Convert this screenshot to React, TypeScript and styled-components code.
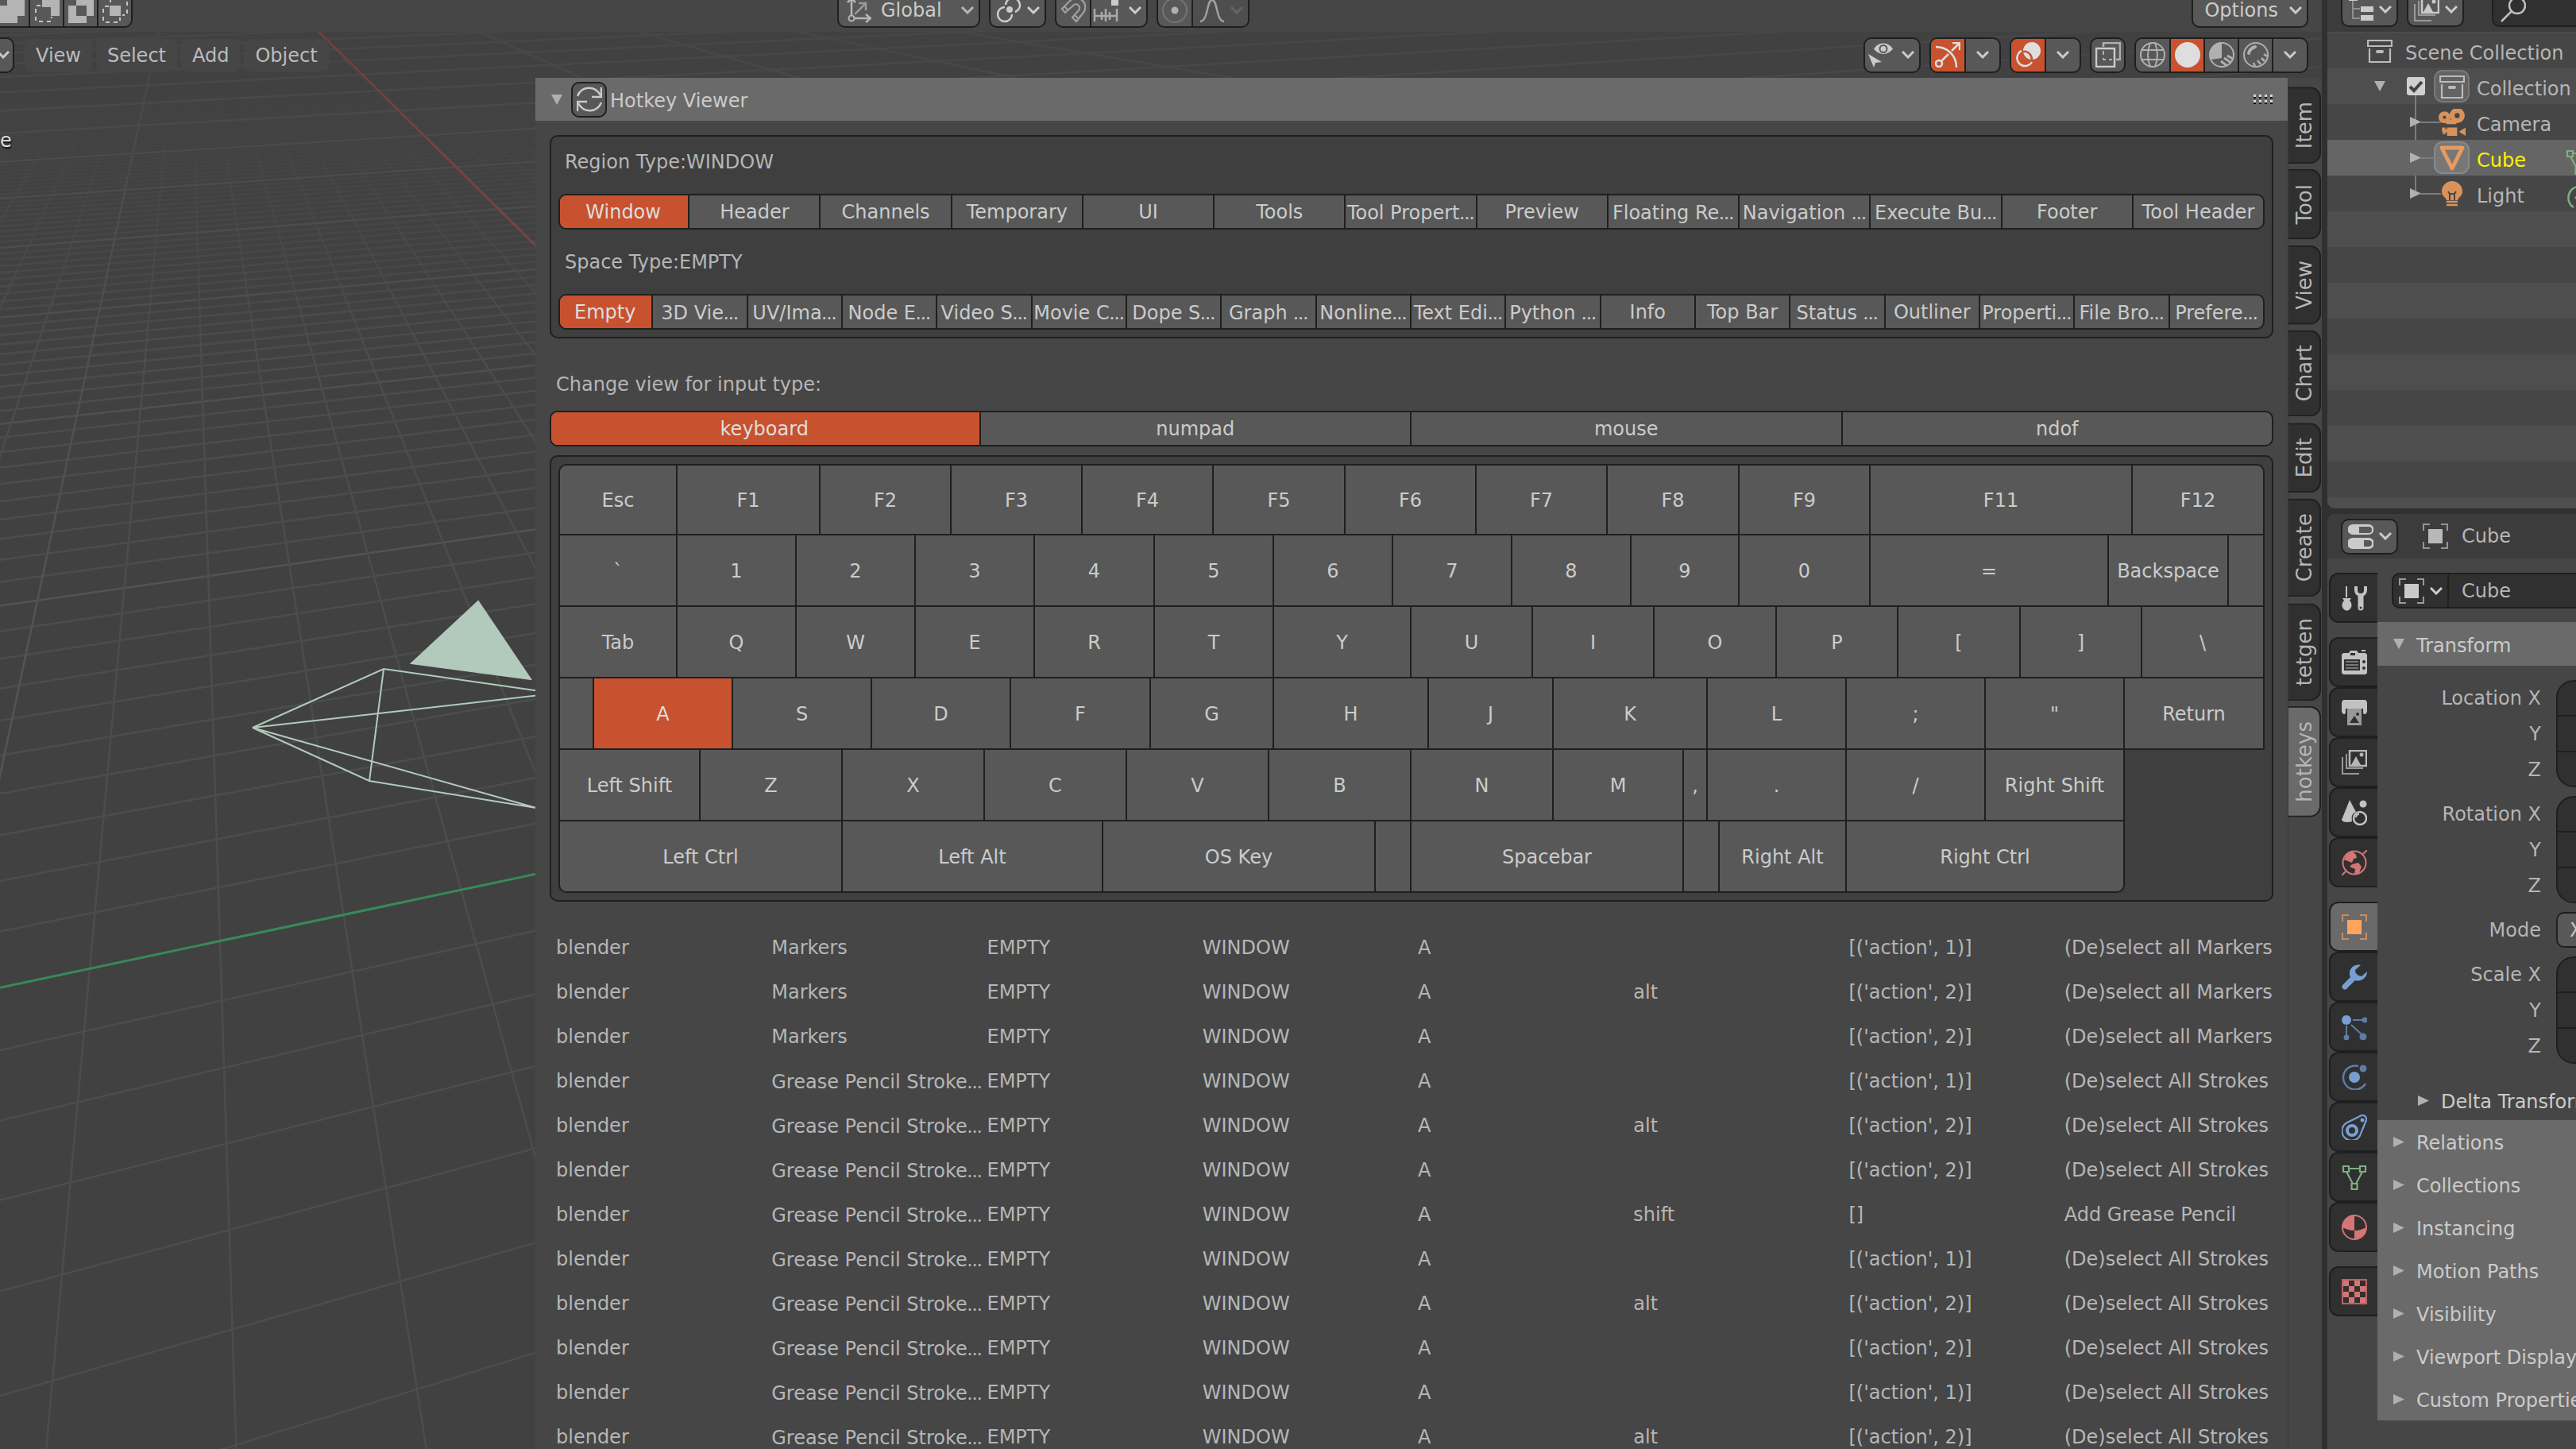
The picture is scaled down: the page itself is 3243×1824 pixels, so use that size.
import React from "react";
import styled, { createGlobalStyle, css } from "styled-components";

const c = {
  body: "#464646",
  gap: "#303030",
  box: "#3f3f3f",
  head: "#3c3c3c",
  button: "#585858",
  line: "#1f1f1f",
  accent: "#c8522f",
  panel: "#6a6a6a",
  field: "#303030",
  text: "#b6b6b6",
  bright: "#cbcbcb",
  orange: "#d8935c",
  blue: "#779fd3",
  red: "#d47676",
  green: "#7fae82",
};

const Global = createGlobalStyle`
  *, *::before, *::after { box-sizing: border-box; }
  html, body { margin: 0; height: 100%; background: ${c.gap}; }
  body, button, input, select {
    font-family: "DejaVu Sans", Verdana, sans-serif;
    font-size: 24px;
    line-height: 28px;
    color: ${c.text};
  }
  body { overflow: hidden; }
  button, input, select { margin: 0; padding: 0; border: 0; background: none; border-radius: 0; }
  button { display: flex; align-items: center; justify-content: center; white-space: nowrap; }
  input, select { appearance: none; outline: 0; min-width: 0; }
  svg { display: block; flex: none; }
  ul { list-style: none; margin: 0; padding: 0; }
`;

/* ---------- shell ---------- */

const Shell = styled.div`
  display: flex;
  gap: 7px;
  height: 100vh;
  overflow: hidden;
  background: ${c.gap};
`;

const Viewport = styled.main`
  position: relative;
  flex: 1 1 0;
  min-width: 0;
  display: flex;
  flex-direction: column;
  overflow: hidden;
  background: #414141;
`;

const Scene = styled.svg`
  position: absolute;
  inset: 0;
  width: 100%;
  height: 100%;
`;

const ToolHeader = styled.header`
  position: relative;
  display: flex;
  align-items: flex-end;
  height: 40px;
  padding: 0 17px 5px 0;
  background: ${c.body};
`;

const ViewHeader = styled.header`
  position: relative;
  display: flex;
  align-items: center;
  justify-content: space-between;
  height: 58px;
  padding: 0 17px 0 0;
`;

const ToolGroups = styled.div`
  display: flex;
  gap: 11px;
`;

const SelectModes = styled.div`
  display: flex;
  width: 1054px;
  margin-left: -8px;
  margin-right: 8px;
`;

const OptionsSlot = styled.div`
  margin-left: auto;
`;

const Group = styled.div`
  flex: none;
  display: flex;
  height: 45px;
  border: 2px solid ${c.line};
  border-radius: 10px;
  background: ${c.button};
  overflow: hidden;
`;

const GroupButton = styled.button<{ $w: number; $active?: boolean; $dim?: boolean; $menu?: boolean; $gap?: number }>`
  flex: none;
  width: ${(p) => p.$w}px;
  gap: ${(p) => p.$gap || 7}px;
  color: ${(p) => (p.$active ? "#dedede" : c.bright)};
  background: ${(p) => (p.$active ? c.accent : p.$dim ? "#4e4e4e" : "transparent")};
  ${(p) =>
    p.$menu &&
    css`
      justify-content: flex-end;
      padding-right: 6px;
    `}
  & + & { border-left: 2px solid ${c.line}; }
`;

const OrientationLabel = styled.label`
  display: flex;
  align-items: center;
  width: 176px;
  padding: 0 6px 0 9px;
`;

const OrientationSelect = styled.select`
  flex: 1;
  padding-left: 12px;
  color: ${c.bright};
`;

const Menus = styled.nav`
  display: flex;
  align-items: center;
  gap: 5px;
`;

const ModeEnd = styled.button`
  width: 28px;
  height: 45px;
  margin: 0 8px 0 -10px;
  border: 2px solid ${c.line};
  border-radius: 10px;
  background: ${c.button};
  color: ${c.bright};
`;

const MenuButton = styled.button`
  height: 41px;
  padding: 2px 14px 0;
  border-radius: 8px;
  background: #464646;
  color: #bcbcbc;
`;

const Work = styled.div`
  position: relative;
  flex: 1;
  min-height: 0;
  display: flex;
`;

const SceneSpace = styled.div`
  flex: none;
  width: 674px;
  padding-top: 65px;
  color: #dedede;
  text-shadow: 1px 2px 2px #111;
`;

/* ---------- hotkey panel ---------- */

const Sidebar = styled.section`
  flex: 1;
  min-width: 0;
  background: ${c.body};
  overflow: hidden;
`;

const SideHeader = styled.header`
  display: flex;
  align-items: center;
  height: 54px;
  padding: 0 18px 0 20px;
  background: ${c.panel};
  color: ${c.bright};
`;

const RefreshButton = styled.button`
  width: 45px;
  height: 45px;
  margin: 0 4px 0 11px;
  border: 2px solid ${c.line};
  border-radius: 10px;
  background: ${c.button};
  color: ${c.bright};
`;

const Title = styled.h2`
  flex: 1;
  margin: 0;
  padding-top: 4px;
  font-size: 24px;
  font-weight: 400;
`;

const SideBody = styled.div`
  display: flex;
  flex-direction: column;
  padding: 18px 18px 0;
`;

const Box = styled.div`
  display: flex;
  flex-direction: column;
  gap: 18px;
  padding: 9px;
  border: 2px solid ${c.line};
  border-radius: 10px;
  background: ${c.box};
`;

const Caption = styled.div`
  height: 45px;
  padding-left: 8px;
  line-height: 47px;
`;

const InputType = styled.div`
  display: flex;
  flex-direction: column;
  gap: 11px;
  padding: 35px 0 11px;
`;

const Segments = styled.div`
  display: flex;
  height: 45px;
  border: 2px solid ${c.line};
  border-radius: 10px;
  background: ${c.button};
  overflow: hidden;
`;

const Segment = styled.button<{ $active?: boolean }>`
  flex: 1 1 0;
  min-width: 0;
  padding-top: 1px;
  overflow: hidden;
  border-right: 2px solid ${c.line};
  color: ${(p) => (p.$active ? "#dedede" : c.bright)};
  background: ${(p) => (p.$active ? c.accent : "transparent")};
  &:first-child { margin-left: -2px; }
  &:last-child { margin-right: -2px; }
`;

const Dots = styled.span`
  font-family: "Open Sans", sans-serif;
`;

const Board = styled.div`
  display: flex;
  flex-direction: column;
`;

const KeyRow = styled.div`
  display: flex;
  height: 92px;
  margin-top: -2px;
  &:first-child { height: 90px; margin-top: 0; }
`;

/* The 4px of side borders is the flex base of a key, so only the rest is shared out. */
const Key = styled.button<{ $span: number; $active?: boolean; $round?: string }>`
  flex: ${(p) => p.$span - 2} 1 0;
  min-width: 0;
  padding-top: 2px;
  border: 2px solid ${c.line};
  border-radius: ${(p) => p.$round || "0"};
  background: ${(p) => (p.$active ? c.accent : c.button)};
  color: ${(p) => (p.$active ? "#dedede" : c.bright)};
  & + & { margin-left: -2px; }
`;

const KeySpace = styled.div<{ $span: number }>`
  flex: ${(p) => p.$span + 2} 1 0;
  margin-left: -2px;
`;

const Bindings = styled.table`
  width: 100%;
  margin-top: 29px;
  table-layout: fixed;
  border-collapse: collapse;
  td { height: 56px; padding: 2px 0 0 8px; white-space: nowrap; }
`;

/* ---------- category tabs ---------- */

const Tabs = styled.nav`
  flex: none;
  width: 43px;
  display: flex;
  flex-direction: column;
  gap: 7px;
  padding: 11px 1px 0 0;
  border-left: 1px solid #3a3a3a;
  background: ${c.body};
`;

const Tab = styled.button<{ $active?: boolean }>`
  width: 41px;
  padding: 17px 0;
  writing-mode: vertical-rl;
  transform: rotate(180deg);
  border: 2px solid ${c.line};
  border-right: 0;
  border-radius: 14px 0 0 14px;
  background: ${(p) => (p.$active ? c.panel : c.field)};
  font-size: 26px;
  line-height: 36px;
`;

/* ---------- right column ---------- */

const Right = styled.aside`
  flex: none;
  width: 313px;
  display: flex;
  flex-direction: column;
  gap: 7px;
`;

const Outliner = styled.section`
  flex: none;
  height: 640px;
  border-radius: 0 0 0 10px;
  background: ${c.body};
  overflow: hidden;
`;

const OutlinerHead = styled.header`
  display: flex;
  align-items: flex-end;
  gap: 11px;
  height: 40px;
  padding: 0 0 6px 17px;
  background: ${c.head};
`;

const SearchField = styled.label`
  flex: none;
  display: flex;
  align-items: center;
  width: 180px;
  height: 45px;
  margin-left: 24px;
  padding-left: 9px;
  border: 2px solid ${c.line};
  border-radius: 10px;
  background: ${c.field};
`;

const Tree = styled.ul`
  height: 600px;
  padding-top: 1px !important;
  background: repeating-linear-gradient(#464646 0 45px, #4e4e4e 45px 90px) 0 1px;
`;

const TreeRow = styled.li<{ $selected?: boolean }>`
  position: relative;
  display: grid;
  grid-template-columns: 92px 42px 45px 1fr;
  align-items: center;
  height: 45px;
  background: ${(p) => (p.$selected ? "#656565" : "transparent")};
`;

const Expander = styled.button<{ $pad: number }>`
  justify-self: end;
  margin-right: ${(p) => p.$pad}px;
`;

const Check = styled.input`
  width: 23px;
  height: 23px;
  margin-left: 8px;
  border-radius: 3px;
  background: #d0d0d0
    url("data:image/svg+xml,%3Csvg xmlns='http://www.w3.org/2000/svg' viewBox='0 0 23 23'%3E%3Cpath d='M4 12l5 5L19 6' fill='none' stroke='%23444' stroke-width='4'/%3E%3C/svg%3E");
`;

const Badge = styled.span<{ $on?: boolean }>`
  display: flex;
  align-items: center;
  justify-content: center;
  width: 45px;
  height: 41px;
  border-radius: 11px;
  ${(p) =>
    p.$on &&
    css`
      background: rgba(255, 255, 255, 0.12);
      border: 2px solid rgba(255, 255, 255, 0.14);
    `}
`;

const RootIcon = styled.span`
  justify-self: end;
  margin-right: 10px;
`;

const TreeLabel = styled.span<{ $root?: boolean; $lit?: boolean }>`
  ${(p) => p.$root && "grid-column: 2 / -1;"}
  display: flex;
  justify-content: space-between;
  padding: 6px 0 0 ${(p) => (p.$root ? 6 : 9)}px;
  white-space: nowrap;
  color: ${(p) => (p.$lit ? "#fff200" : c.text)};
`;

const DataSlot = styled.span`
  width: 13px;
  height: 28px;
`;

const TreeLine = styled.span<{ $stem?: boolean }>`
  position: absolute;
  background: #7c7c7c;
  ${(p) =>
    p.$stem
      ? "left: 110px; top: 34px; width: 2px; height: 120px;"
      : "left: 117px; top: 22px; width: 26px; height: 2px;"}
`;

const Properties = styled.section`
  flex: 1;
  display: flex;
  flex-direction: column;
  border-radius: 10px 0 0 0;
  background: ${c.body};
  overflow: hidden;
`;

const PropHead = styled.header`
  display: flex;
  align-items: center;
  height: 56px;
  padding-left: 17px;
  background: ${c.head};
`;

const PropCrumb = styled.span`
  padding-left: 17px;
`;

const CrumbIcon = styled.span`
  padding-left: 31px;
`;

const PropBody = styled.div`
  flex: 1;
  display: flex;
`;

const NavTabs = styled.nav`
  flex: none;
  display: flex;
  flex-direction: column;
  gap: 18px;
  width: 63px;
  padding: 18px 0 0 2px;
`;

const NavTab = styled.button<{ $active?: boolean }>`
  width: 61px;
  height: 63px;
  border: 2px solid ${c.line};
  border-right: 0;
  border-radius: 12px 0 0 12px;
  background: ${(p) => (p.$active ? c.panel : c.field)};
`;

const PropMain = styled.div`
  flex: 1;
  min-width: 0;
  padding-top: 18px;
  overflow: hidden;
`;

const NameField = styled.div`
  display: flex;
  width: 400px;
  height: 45px;
  margin: 0 0 17px 18px;
  border: 2px solid ${c.line};
  border-radius: 10px;
  background: ${c.field};
  overflow: hidden;
`;

const NameInput = styled.input`
  flex: 1;
  padding-left: 16px;
  border-left: 2px solid ${c.line};
`;

const PanelHead = styled.button<{ $h: number; $indent?: boolean; $plain?: boolean }>`
  width: 100%;
  height: ${(p) => p.$h}px;
  justify-content: flex-start;
  gap: 15px;
  padding-left: ${(p) => (p.$indent ? 51 : 20)}px;
  background: ${(p) => (p.$plain ? "transparent" : c.panel)};
  color: ${c.bright};
`;

const PanelName = styled.span`
  padding-top: 4px;
`;

const Transform = styled.div`
  display: flex;
  flex-direction: column;
  gap: 11px;
  padding: 18px 0 21px;
`;

const Vector = styled.div`
  display: grid;
  grid-template-columns: 206px 100px;
  column-gap: 19px;
`;

const AxisLabels = styled.div`
  display: flex;
  flex-direction: column;
  text-align: right;
  label { height: 45px; line-height: 47px; white-space: nowrap; }
`;

const AxisFields = styled.div`
  display: flex;
  flex-direction: column;
  border: 2px solid ${c.line};
  border-radius: 22px;
  background: ${c.field};
  overflow: hidden;
  input { width: 100%; flex: 1; padding-left: 20px; }
  input + input { border-top: 2px solid ${c.line}; }
`;

const ModeSelect = styled.select`
  width: 200px;
  height: 45px;
  padding-left: 15px;
  border: 2px solid ${c.line};
  border-radius: 10px;
  background: ${c.button};
  color: ${c.bright};
`;

const NavGroup = styled.div`
  display: flex;
  flex-direction: column;
`;

/* ---------- icons ---------- */

type IconProps = { children: React.ReactNode; color?: string; size?: number };
const Icon = ({ children, color = "currentColor", size = 32 }: IconProps) => (
  <svg width={size} height={size} viewBox="0 0 32 32" fill="none" stroke={color} strokeWidth={2} aria-hidden="true">
    {children}
  </svg>
);

const Chevron = ({ color = "currentColor" }: { color?: string }) => (
  <svg width="16" height="10" viewBox="0 0 16 10" fill="none" stroke={color} strokeWidth="3" aria-hidden="true">
    <path d="M1 1l7 7 7-7" />
  </svg>
);

const Down = () => (
  <svg width="14" height="13" viewBox="0 0 14 13" aria-hidden="true">
    <path d="M0 0h14L7 13z" fill="#b0b0b0" />
  </svg>
);

const Across = () => (
  <svg width="14" height="13" viewBox="0 0 14 13" aria-hidden="true">
    <path d="M0 0v13L14 6.500z" fill="#b0b0b0" />
  </svg>
);

const f = { fill: "currentColor", stroke: "none" } as const;
const S = "#b4b4b4";

const IconExtend = () => <Icon><path fill={S} stroke="none" d="M10 0h22v23h-9v9H0V10h10z" /></Icon>;
const IconSubtract = () => (
  <Icon>
    <path fill={S} stroke="none" d="M10 0h22v23H21V12H10z" />
    <path stroke="#c4c4c4" strokeDasharray="5 5" d="M8 10H2v20h20v-6" />
  </Icon>
);
const IconXor = () => <Icon><path fill={S} stroke="none" fillRule="evenodd" d="M0 10h23v22H0zM10 0h22v23H10z" /></Icon>;
const IconIntersect = () => (
  <Icon>
    <path fill={S} stroke="none" d="M9 10h14v13H9z" />
    <path stroke="#c4c4c4" strokeDasharray="5 5" d="M8 11H1v20h21v-6M10 6V1h21v21h-6" />
  </Icon>
);
const IconAxes = () => (
  <Icon>
    <circle cx="7" cy="26" r="3.500" />
    <path d="M7 22V2M2 6l5-5 5 5M11 26h19M25 21l6 5-6 5" strokeWidth="2.500" />
    <path stroke="#999" d="M11 21L24 8M16 7h9v9" strokeWidth="2.500" />
  </Icon>
);
const IconPivot = () => (
  <Icon>
    <circle cx="17" cy="15" r="4" {...f} />
    <path strokeWidth="2.500" d="M11 12a9 9 0 1 0 9 9M12 9a9 9 0 1 1 12 9" />
  </Icon>
);
const IconMagnet = () => (
  <Icon color="#a0a0a0">
    <path strokeWidth="2.200" d="M2 14L12 4a11 11 0 0 1 16 16L20 30l-5-5 8-9a4.500 4.500 0 0 0-7-6L6 19zM5 11l5 5M18 22l5 5" />
  </Icon>
);
const IconIncrement = () => (
  <Icon>
    <path {...f} d="M23 1h10v9H23z" />
    <path stroke="#aaa" strokeWidth="2.500" d="M2 14v16M2 23h28M30 14v16M11 18v10M16 14v16M21 18v10" />
  </Icon>
);
const IconProportional = () => (
  <Icon>
    <circle cx="16" cy="16" r="15" stroke="#757575" />
    <circle cx="16" cy="16" r="4.500" fill="#b0b0b0" stroke="none" />
  </Icon>
);
const IconBell = () => (
  <Icon color="#a0a0a0"><path strokeWidth="2.500" d="M1 30c10 0 8-27 15-27s5 27 15 27" /></Icon>
);
const IconVisibility = () => (
  <Icon>
    <path {...f} d="M7 8.500C13-1 25-1 31 8.500 25 17 13 17 7 8.500z" />
    <circle cx="19" cy="8.500" r="4.500" stroke={c.button} />
    <path {...f} d="M0 15l17 10-8 1-2 6z" />
  </Icon>
);
const IconGizmo = () => (
  <Icon>
    <circle cx="5" cy="27" r="4" strokeWidth="2.500" />
    <path strokeWidth="2.500" d="M8 24l9-9M1 6c14 0 26 10 26 26M21 11L31 1M22 1h9v9" />
  </Icon>
);
const IconOverlay = () => (
  <Icon>
    <circle cx="21" cy="11" r="11" {...f} />
    <path strokeWidth="2.500" d="M8 11a10 10 0 1 0 13 14" />
    <path stroke={c.accent} strokeWidth="2.500" d="M10 12c6-1 11 4 11 10" />
  </Icon>
);
const IconXray = () => (
  <Icon>
    <path strokeWidth="2.500" d="M1 8h23v23H1z" />
    <path stroke="#b0b0b0" d="M10 6V1h21v21h-5" strokeWidth="2.500" />
    <path strokeDasharray="5 4" d="M10 11v11h11" stroke="#b0b0b0" />
  </Icon>
);
const IconWire = () => (
  <Icon color="#b0b0b0">
    <circle cx="16" cy="16" r="15" />
    <path d="M3 10h26M3 22h26M13 1c-4 10-4 20 0 30M19 1c4 10 4 20 0 30" />
  </Icon>
);
const IconSolid = () => <Icon><circle cx="16" cy="16" r="16" {...f} /></Icon>;
const IconMatPrev = () => (
  <Icon color="#b0b0b0">
    <circle cx="16" cy="16" r="15" />
    <path fill="#b0b0b0" stroke="none" d="M16 0v20L2 22A16 16 0 0 1 16 0z" />
    <path strokeWidth="3" d="M19 20l9 6M15 24l8 6M23 17l7 4" />
  </Icon>
);
const IconRendered = () => (
  <Icon color="#b0b0b0">
    <circle cx="16" cy="16" r="15" />
    <path strokeWidth="4" strokeLinecap="round" d="M7 14c1-4 4-7 8-8" />
    <path strokeWidth="2.500" d="M26 15l4 3M23 20l4 4M18 23l4 5M13 26l2 4" />
  </Icon>
);
const IconRefresh = () => (
  <Icon>
    <path strokeWidth="2.500" d="M1 12C6-1 23-2 30 11M31 1v12H19M31 20C26 33 9 34 2 21M1 31V19h12" />
  </Icon>
);
const IconTree = () => (
  <Icon>
    <path {...f} d="M1 0h11v5H1zM16 12h16v7H16zM16 23h16v7H16z" />
    <path stroke="#8f8f8f" d="M6 5v22h9M6 15h9" />
  </Icon>
);
const IconLayers = () => (
  <Icon>
    <path strokeWidth="2.500" d="M10 1h21v19H10z" />
    <path {...f} d="M12 19l6-11 6 11z" />
    <circle cx="25" cy="6" r="2.500" {...f} />
    <path stroke="#999" d="M6 5v18h21M1 9v21h21" />
  </Icon>
);
const IconSearch = () => (
  <Icon color="#c0c0c0"><circle cx="21" cy="11" r="10" strokeWidth="2.500" /><path strokeWidth="2.500" d="M14 18L1 31" /></Icon>
);
const IconCollection = () => (
  <Icon color="#bbb">
    <path d="M1 3h30v7H1zM3 13v17h26V13" strokeWidth="2.200" />
    <path strokeWidth="4" strokeLinecap="round" d="M13 17h6" />
  </Icon>
);
const IconCamera = () => (
  <Icon color={c.orange} size={34}>
    <circle cx="7" cy="10" r="4.500" strokeWidth="5" />
    <circle cx="22" cy="8" r="6" strokeWidth="6" />
    <path fill={c.orange} stroke="none" d="M9 13h12v5H9zM4 22h4v2h2v-2h12v10H10v-4H8v2H5v-3H4zM24 27l8-5v10z" />
  </Icon>
);
const IconCone = () => (
  <Icon color="#e59b62"><path strokeWidth="5" strokeLinejoin="round" d="M3 3h26L16 29z" /></Icon>
);
const IconBulb = () => (
  <Icon color={c.orange}>
    <path fill={c.orange} stroke="none" d="M16 0a13 13 0 0 1 13 13c0 6-4 6-6 11H9C7 19 3 19 3 13A13 13 0 0 1 16 0z" />
    <path stroke="#464646" d="M11 13l2 3h6l2-3M13 16v8M19 16v8" />
    <path strokeWidth="2.500" d="M9 26h14M9 30h14" />
  </Icon>
);
const IconMesh = () => (
  <Icon color={c.green}>
    <path strokeWidth="2.200" d="M2 2h7v7H2zM23 2h7v7h-7zM12.500 24h7v7h-7zM9 5h14M6 9l8 15M26 9l-8 15" />
  </Icon>
);
const IconLightData = () => (
  <Icon color={c.green}><path d="M10 28C-1 22 2 2 17 2M12 15l4 4v10" strokeWidth="2.500" /></Icon>
);
const IconProps = () => (
  <Icon>
    <path {...f} fillRule="evenodd" d="M6 1h20a6 6 0 0 1 0 13H6A6 6 0 0 1 6 1zM14 4v8h12a4 4 0 0 0 0-8zM6 18h20a6 6 0 0 1 0 14H6a6 6 0 0 1 0-14zM20 21v8h6a4 4 0 0 0 0-8z" />
  </Icon>
);
const IconObject = ({ fill = "#b8b8b8", frame = "#949494" }: { fill?: string; frame?: string }) => (
  <Icon color={frame}>
    <path d="M1 9V1h8M23 1h8v8M31 23v8h-8M9 31H1v-8" />
    <path fill={fill} stroke="none" d="M7 7h18v18H7z" />
  </Icon>
);
const IconTool = () => (
  <Icon color="#c2c2c2">
    <path d="M6 1v14" />
    <path fill="#c2c2c2" stroke="none" d="M1 16h11l-2 3a6 7 0 1 1-7 0z" />
    <path strokeWidth="7" strokeLinecap="round" d="M24 14v14" />
    <path strokeWidth="4" d="M18 1v5a6 6 0 0 0 12 0V1" />
    <circle cx="24" cy="28" r="1.500" fill={c.field} stroke="none" />
  </Icon>
);
const IconRender = () => (
  <Icon color="#c2c2c2">
    <path fill="#c2c2c2" stroke="none" fillRule="evenodd" d="M2 4h7l2-3h8l2 3h9l2 2v23l-2 2H2l-2-2V6zM3 12v14h20V12zM11 4v3h6V4z" />
    <path stroke="#777" d="M5 15h16M5 19h16M5 23h16" />
    <circle cx="28" cy="15" r="2" fill={c.field} stroke="none" />
    <circle cx="28" cy="23" r="2" fill={c.field} stroke="none" />
    <path d="M25 1h5" />
  </Icon>
);
const IconOutput = () => (
  <Icon color="#c2c2c2">
    <path fill="#999" stroke="none" d="M7 10h18v22H7z" />
    <path fill="#c2c2c2" stroke="none" d="M2 0h28l2 3v12l-2 3h-2l-1-2v-5H5v5l-1 2H2l-2-3V3z" />
    <path fill={c.field} stroke="none" d="M10 29l6-9 6 9z" />
    <circle cx="20" cy="18" r="2" fill={c.field} stroke="none" />
  </Icon>
);
const IconScene = () => (
  <Icon color="#c2c2c2">
    <path fill="#c2c2c2" stroke="none" d="M10 0l8 15c-5 2-6 6-5 12-6 2-12 1-13-2z" />
    <circle cx="27" cy="5" r="4.500" fill="#c2c2c2" stroke="none" />
    <circle cx="23" cy="23" r="8" strokeWidth="2.500" />
    <path d="M18 22c0-3 2-4 4-4" />
  </Icon>
);
const IconWorld = () => (
  <Icon color={c.red}>
    <circle cx="16" cy="16" r="14.500" />
    <path d="M0 32l5-5M27 5l5-5" />
    <path fill={c.red} stroke="none" d="M3 13C5 5 10 2 15 3l3 3 1 4-4 1-2 5-5-2-2-1zM13 18l8-2 4 5-3 8-6 1 1-6-7-3z" />
  </Icon>
);
const IconWrench = () => (
  <Icon color={c.blue}>
    <path strokeWidth="7" strokeLinecap="round" d="M4 28l13-13" />
    <path fill={c.blue} stroke="none" d="M24 1c-8-2-15 4-14 12 1 6 8 9 14 7 5-2 8-6 8-11l-7 6-7-2-1-6z" />
  </Icon>
);
const IconParticles = () => (
  <Icon color="#5f7ca6">
    <path d="M14 7h12M6 14v13M12 13l13 12" />
    <circle cx="6" cy="7" r="6" fill={c.blue} stroke="none" />
    <circle cx="29" cy="7" r="3.500" fill="#5f7ca6" stroke="none" />
    <circle cx="6" cy="29" r="3.500" fill="#5f7ca6" stroke="none" />
    <circle cx="27" cy="28" r="4.500" fill="#5f7ca6" stroke="none" />
  </Icon>
);
const IconPhysics = () => (
  <Icon color="#5f7ca6">
    <path strokeWidth="2.500" d="M21 2A15 15 0 1 0 30 24" />
    <circle cx="16" cy="16" r="7" fill={c.blue} stroke="none" />
    <circle cx="27" cy="5" r="4.500" fill="#5f7ca6" stroke="none" />
  </Icon>
);
const IconConstraint = () => (
  <Icon color={c.blue}>
    <path strokeWidth="2.200" d="M7 10L25 1c4-1 7 3 6 6l-7 17A12 12 0 1 1 7 10z" />
    <circle cx="13" cy="20" r="6" strokeWidth="4" />
    <circle cx="26" cy="7" r="2.500" fill={c.blue} stroke="none" />
  </Icon>
);
const IconMaterial = () => (
  <Icon color={c.red}>
    <circle cx="16" cy="16" r="15" />
    <path fill={c.red} stroke="none" d="M16 1v19c-6 0-11-2-15-4C1 8 8 1 16 1zM16 20c6 0 11-2 15-4 0 8-7 15-15 15z" />
  </Icon>
);
const IconTexture = () => (
  <Icon color="#b96464">
    <path d="M1 1h30v30H1z" />
    <path fill={c.red} stroke="none" d="M2 2h7v7H2zM16 2h7v7h-7zM9 9h7v7H9zM23 9h7v7h-7zM2 16h7v7H2zM16 16h7v7h-7zM9 23h7v7H9zM23 23h7v7h-7z" />
  </Icon>
);
const Grip = () => (
  <svg width="25" height="13" viewBox="0 0 25 13" aria-hidden="true">
    {[0, 7].flatMap((y) =>
      [0, 7, 14, 21].map((x) => (
        <g key={`${x}-${y}`}>
          <rect x={x} y={y} width="3" height="3" fill="#d8d8d8" />
          <rect x={x} y={y + 3} width="3" height="2" fill="#141414" />
        </g>
      ))
    )}
  </svg>
);

/* ---------- perspective floor ---------- */

const VP = { x: 235, y: -124 };
const rowY = (n: number, x: number) => {
  const l = (1243.2 - 6.12 * n) / (1 + 0.055 * n);
  const r = (1100.4 - 6.75 * n) / (1 + 0.055 * n);
  return l + ((r - l) * x) / 674;
};
const colX = (off: number, y: number) => VP.x + (off * (y - VP.y)) / 824;

const Floor = () => {
  const rows = Array.from({ length: 160 }, (_, i) => i - 6).filter((n) => n !== 0);
  const cols = Array.from({ length: 80 }, (_, i) => i - 30).filter((n) => n !== 0);
  return (
    <Scene viewBox="0 0 2923 1824" preserveAspectRatio="xMinYMin slice" fill="none" strokeWidth="2.500" aria-hidden="true">
      <defs>
        <linearGradient id="minor" gradientUnits="userSpaceOnUse" x1="0" y1="110" x2="0" y2="450">
          <stop offset="0" stopColor="#4b4b4b" stopOpacity="0" />
          <stop offset="1" stopColor="#4c4c4c" />
        </linearGradient>
        <linearGradient id="major" gradientUnits="userSpaceOnUse" x1="0" y1="20" x2="0" y2="800">
          <stop offset="0" stopColor="#464646" />
          <stop offset="0.300" stopColor="#4c4c4c" />
          <stop offset="1" stopColor="#545454" />
        </linearGradient>
        <linearGradient id="axis" gradientUnits="userSpaceOnUse" x1="0" y1="40" x2="0" y2="310">
          <stop offset="0" stopColor="#6a4141" />
          <stop offset="1" stopColor="#7e4141" />
        </linearGradient>
      </defs>
      {rows.map((n) => (
        <path key={`r${n}`} stroke={n % 10 ? "url(#minor)" : "url(#major)"} d={`M0 ${rowY(n, 0)}L2923 ${rowY(n, 2923)}`} />
      ))}
      {cols.map((n) => {
        const off = 836 + n * 101.2;
        return (
          <path key={`c${n}`} stroke={n % 10 ? "url(#minor)" : "url(#major)"} d={`M${colX(off, 20)} 20L${colX(off, 1824)} 1824`} />
        );
      })}
      <path stroke="url(#axis)" strokeWidth="3" d={`M${colX(836, 20)} 20L${colX(836, 500)} 500`} />
      <path stroke="#378a58" strokeWidth="3" d={`M0 ${rowY(0, 0)}L800 ${rowY(0, 800)}`} />
      <g stroke="#b2cabc" strokeWidth="2">
        <path d="M680 870L483 842 318 916 680 875M318 916l357 101-210-34zM483 842l-18 141" />
        <path fill="#b2cabc" d="M602 757l-84 78 150 20z" />
      </g>
    </Scene>
  );
};

/* ---------- data ---------- */

const regions = ["Window", "Header", "Channels", "Temporary", "UI", "Tools", "Tool Propert…", "Preview", "Floating Re…", "Navigation …", "Execute Bu…", "Footer", "Tool Header"];
const spaces = ["Empty", "3D Vie…", "UV/Ima…", "Node E…", "Video S…", "Movie C…", "Dope S…", "Graph …", "Nonline…", "Text Edi…", "Python …", "Info", "Top Bar", "Status …", "Outliner", "Properti…", "File Bro…", "Prefere…"];
const inputs = ["keyboard", "numpad", "mouse", "ndof"];

const keys: [string, number][][] = [
  [["Esc", 148], ["F1", 180], ["F2", 165], ["F3", 165], ["F4", 165], ["F5", 166], ["F6", 165], ["F7", 165], ["F8", 166], ["F9", 165], ["F11", 330], ["F12", 166]],
  [["`", 148], ["1", 150], ["2", 150], ["3", 150], ["4", 151], ["5", 150], ["6", 150], ["7", 150], ["8", 150], ["9", 136], ["0", 165], ["=", 300], ["Backspace", 151], ["", 45]],
  [["Tab", 148], ["Q", 150], ["W", 150], ["E", 150], ["R", 151], ["T", 150], ["Y", 173], ["U", 153], ["I", 153], ["O", 154], ["P", 153], ["[", 154], ["]", 153], ["\\", 154]],
  [["", 43], ["A", 175], ["S", 175], ["D", 175], ["F", 176], ["G", 155], ["H", 195], ["J", 157], ["K", 194], ["L", 175], [";", 175], ["\"", 175], ["Return", 176]],
  [["Left Shift", 177], ["Z", 179], ["X", 179], ["C", 179], ["V", 179], ["B", 179], ["N", 179], ["M", 164], [",", 30], [".", 175], ["/", 175], ["Right Shift", 175]],
  [["Left Ctrl", 356], ["Left Alt", 328], ["OS Key", 343], ["", 45], ["Spacebar", 343], ["", 45], ["Right Alt", 160], ["Right Ctrl", 350]],
];

const gp = "Grease Pencil Stroke…";
const bindings = [
  ["Markers", "", "[('action', 1)]", "(De)select all Markers"],
  ["Markers", "alt", "[('action', 2)]", "(De)select all Markers"],
  ["Markers", "", "[('action', 2)]", "(De)select all Markers"],
  [gp, "", "[('action', 1)]", "(De)select All Strokes"],
  [gp, "alt", "[('action', 2)]", "(De)select All Strokes"],
  [gp, "", "[('action', 2)]", "(De)select All Strokes"],
  [gp, "shift", "[]", "Add Grease Pencil"],
  [gp, "", "[('action', 1)]", "(De)select All Strokes"],
  [gp, "alt", "[('action', 2)]", "(De)select All Strokes"],
  [gp, "", "[('action', 2)]", "(De)select All Strokes"],
  [gp, "", "[('action', 1)]", "(De)select All Strokes"],
  [gp, "alt", "[('action', 2)]", "(De)select All Strokes"],
];

const categories = ["Item", "Tool", "View", "Chart", "Edit", "Create", "tetgen", "hotkeys"];
const panels = ["Relations", "Collections", "Instancing", "Motion Paths", "Visibility", "Viewport Display", "Custom Properties"];

const navGroups: [string, React.ReactNode][][] = [
  [["Tool settings", <IconTool />]],
  [["Render", <IconRender />], ["Output", <IconOutput />], ["View layer", <IconLayers />], ["Scene", <IconScene />], ["World", <IconWorld />]],
  [["Object", <IconObject fill="#ffa45e" frame="#c98d5e" />], ["Modifiers", <IconWrench />], ["Particles", <IconParticles />], ["Physics", <IconPhysics />], ["Constraints", <IconConstraint />], ["Mesh data", <IconMesh />], ["Material", <IconMaterial />]],
  [["Texture", <IconTexture />]],
];

const Clip = ({ text }: { text: string }) =>
  text.endsWith("…") ? <span>{text.slice(0, -1)}<Dots>…</Dots></span> : <span>{text}</span>;

const SegmentRow = ({ items, label }: { items: string[]; label: string }) => (
  <Segments role="group" aria-label={label}>
    {items.map((t, i) => (
      <Segment key={t} $active={i === 0} aria-pressed={i === 0}><Clip text={t} /></Segment>
    ))}
  </Segments>
);

const VectorRow = ({ name }: { name: string }) => (
  <Vector>
    <AxisLabels>
      {["X", "Y", "Z"].map((a) => (
        <label key={a} htmlFor={`${name}-${a}`}>{a === "X" ? `${name} X` : a}</label>
      ))}
    </AxisLabels>
    <AxisFields>
      {["X", "Y", "Z"].map((a) => <input key={a} id={`${name}-${a}`} />)}
    </AxisFields>
  </Vector>
);

const corners: Record<string, string> = {
  Esc: "10px 0 0 0",
  F12: "0 10px 0 0",
  "Left Ctrl": "0 0 0 10px",
  "Right Ctrl": "0 0 10px 0",
};

/* ---------- page ---------- */

export default function App() {
  return (
    <Shell>
      <Global />
      <Viewport>
        <Floor />
        <ToolHeader>
          <SelectModes>
            <Group>
              <GroupButton $w={42} aria-label="Extend"><IconExtend /></GroupButton>
              <GroupButton $w={43} aria-label="Subtract"><IconSubtract /></GroupButton>
              <GroupButton $w={43} aria-label="Difference"><IconXor /></GroupButton>
              <GroupButton $w={43} aria-label="Intersect"><IconIntersect /></GroupButton>
            </Group>
          </SelectModes>
          <ToolGroups>
            <Group>
              <OrientationLabel>
                <IconAxes />
                <OrientationSelect aria-label="Orientation"><option>Global</option></OrientationSelect>
                <Chevron />
              </OrientationLabel>
            </Group>
            <Group><GroupButton $w={68} $menu aria-label="Pivot point"><IconPivot /><Chevron /></GroupButton></Group>
            <Group>
              <GroupButton $w={42} aria-label="Snap"><IconMagnet /></GroupButton>
              <GroupButton $w={71} $menu $gap={13} aria-label="Snap to"><IconIncrement /><Chevron /></GroupButton>
            </Group>
            <Group>
              <GroupButton $w={42} aria-label="Proportional editing"><IconProportional /></GroupButton>
              <GroupButton $w={71} $dim $menu aria-label="Falloff"><IconBell /><Chevron color="#656565" /></GroupButton>
            </Group>
          </ToolGroups>
          <OptionsSlot>
            <Group><GroupButton $w={143} $menu $gap={14}><span>Options</span><Chevron /></GroupButton></Group>
          </OptionsSlot>
        </ToolHeader>
        <ViewHeader>
          <Menus>
            <ModeEnd aria-label="Mode"><Chevron /></ModeEnd>
            {["View", "Select", "Add", "Object"].map((m) => <MenuButton key={m}>{m}</MenuButton>)}
          </Menus>
          <ToolGroups>
            <Group><GroupButton $w={68} $menu $gap={10} aria-label="Visibility"><IconVisibility /><Chevron /></GroupButton></Group>
            <Group>
              <GroupButton $w={42} $active aria-label="Gizmos"><IconGizmo /></GroupButton>
              <GroupButton $w={44} aria-label="Gizmo options"><Chevron /></GroupButton>
            </Group>
            <Group>
              <GroupButton $w={42} $active aria-label="Overlays"><IconOverlay /></GroupButton>
              <GroupButton $w={44} aria-label="Overlay options"><Chevron /></GroupButton>
            </Group>
            <Group><GroupButton $w={41} aria-label="X-ray"><IconXray /></GroupButton></Group>
            <Group>
              <GroupButton $w={42} aria-label="Wireframe"><IconWire /></GroupButton>
              <GroupButton $w={43} $active aria-label="Solid"><IconSolid /></GroupButton>
              <GroupButton $w={43} aria-label="Material preview"><IconMatPrev /></GroupButton>
              <GroupButton $w={43} aria-label="Rendered"><IconRendered /></GroupButton>
              <GroupButton $w={44} aria-label="Shading options"><Chevron /></GroupButton>
            </Group>
          </ToolGroups>
        </ViewHeader>
        <Work>
          <SceneSpace>e</SceneSpace>
          <Sidebar>
            <SideHeader>
              <Down />
              <RefreshButton aria-label="Refresh"><IconRefresh /></RefreshButton>
              <Title>Hotkey Viewer</Title>
              <Grip />
            </SideHeader>
            <SideBody>
              <Box>
                <Caption>Region Type:WINDOW</Caption>
                <SegmentRow items={regions} label="Region type" />
                <Caption>Space Type:EMPTY</Caption>
                <SegmentRow items={spaces} label="Space type" />
              </Box>
              <InputType>
                <Caption>Change view for input type:</Caption>
                <SegmentRow items={inputs} label="Input type" />
              </InputType>
              <Box>
                <Board>
                  {keys.map((row, r) => (
                    <KeyRow key={r}>
                      {row.map(([k, w], i) => (
                        <Key key={i} $span={w} $active={k === "A"} $round={corners[k]} aria-label={k || "Unassigned"}>{k}</Key>
                      ))}
                      {r > 3 && <KeySpace $span={176} />}
                    </KeyRow>
                  ))}
                </Board>
              </Box>
              <Bindings>
                <tbody>
                  {bindings.map(([map, mod, props, name], i) => (
                    <tr key={i}>
                      <td>blender</td>
                      <td><Clip text={map} /></td>
                      <td>EMPTY</td>
                      <td>WINDOW</td>
                      <td>A</td>
                      <td>{mod}</td>
                      <td>{props}</td>
                      <td>{name}</td>
                    </tr>
                  ))}
                </tbody>
              </Bindings>
            </SideBody>
          </Sidebar>
          <Tabs>
            {categories.map((t) => <Tab key={t} $active={t === "hotkeys"}>{t}</Tab>)}
          </Tabs>
        </Work>
      </Viewport>

      <Right>
        <Outliner>
          <OutlinerHead>
            <Group><GroupButton $w={68} $menu aria-label="Editor type"><IconTree /><Chevron /></GroupButton></Group>
            <Group><GroupButton $w={68} $menu aria-label="Display mode"><IconLayers /><Chevron /></GroupButton></Group>
            <SearchField><IconSearch /><input aria-label="Search" /></SearchField>
          </OutlinerHead>
          <Tree>
            <TreeRow>
              <RootIcon><IconCollection /></RootIcon>
              <TreeLabel $root>Scene Collection</TreeLabel>
            </TreeRow>
            <TreeRow>
              <TreeLine $stem />
              <Expander $pad={19} aria-label="Collapse"><Down /></Expander>
              <Check type="checkbox" defaultChecked aria-label="Collection visible" />
              <Badge $on><IconCollection /></Badge>
              <TreeLabel>Collection</TreeLabel>
            </TreeRow>
            <TreeRow>
              <TreeLine />
              <span />
              <Expander $pad={16} aria-label="Expand Camera"><Across /></Expander>
              <Badge><IconCamera /></Badge>
              <TreeLabel>Camera</TreeLabel>
            </TreeRow>
            <TreeRow $selected>
              <TreeLine />
              <span />
              <Expander $pad={16} aria-label="Expand Cube"><Across /></Expander>
              <Badge $on><IconCone /></Badge>
              <TreeLabel $lit>Cube<DataSlot><IconMesh /></DataSlot></TreeLabel>
            </TreeRow>
            <TreeRow>
              <TreeLine />
              <span />
              <Expander $pad={16} aria-label="Expand Light"><Across /></Expander>
              <Badge><IconBulb /></Badge>
              <TreeLabel>Light<DataSlot><IconLightData /></DataSlot></TreeLabel>
            </TreeRow>
          </Tree>
        </Outliner>

        <Properties>
          <PropHead>
            <Group><GroupButton $w={68} $menu aria-label="Editor type"><IconProps /><Chevron /></GroupButton></Group>
            <CrumbIcon><IconObject /></CrumbIcon>
            <PropCrumb>Cube</PropCrumb>
          </PropHead>
          <PropBody>
            <NavTabs>
              {navGroups.map((g, i) => (
                <NavGroup key={i}>
                  {g.map(([name, icon]) => (
                    <NavTab key={name} $active={name === "Object"} aria-label={name}>{icon}</NavTab>
                  ))}
                </NavGroup>
              ))}
            </NavTabs>
            <PropMain>
              <NameField>
                <GroupButton $w={68} $menu aria-label="Browse object"><IconObject fill="#cacaca" frame="#9a9a9a" /><Chevron /></GroupButton>
                <NameInput aria-label="Object name" defaultValue="Cube" />
              </NameField>
              <PanelHead $h={55}><Down /><PanelName>Transform</PanelName></PanelHead>
              <Transform>
                <VectorRow name="Location" />
                <VectorRow name="Rotation" />
                <Vector>
                  <AxisLabels><label htmlFor="mode">Mode</label></AxisLabels>
                  <ModeSelect id="mode"><option>XYZ Euler</option></ModeSelect>
                </Vector>
                <VectorRow name="Scale" />
              </Transform>
              <PanelHead $h={50} $indent $plain><Across /><PanelName>Delta Transform</PanelName></PanelHead>
              {panels.map((p) => <PanelHead key={p} $h={54}><Across /><PanelName>{p}</PanelName></PanelHead>)}
            </PropMain>
          </PropBody>
        </Properties>
      </Right>
    </Shell>
  );
}
